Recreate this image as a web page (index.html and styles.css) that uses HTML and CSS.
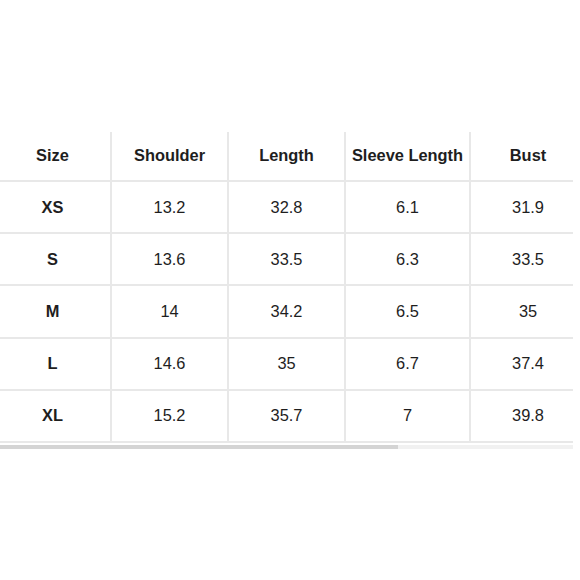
FILE: index.html
```html
<!DOCTYPE html>
<html>
<head>
<meta charset="utf-8">
<link rel="stylesheet" href="styles.css">
</head>
<body>
<div class="wrap">
  <table class="sizes">
    <colgroup>
      <col class="c1"><col class="c2"><col class="c3"><col class="c4"><col class="c5">
    </colgroup>
    <thead>
      <tr class="head"><th>Size</th><th>Shoulder</th><th>Length</th><th>Sleeve Length</th><th>Bust</th></tr>
    </thead>
    <tbody>
      <tr><th>XS</th><td>13.2</td><td>32.8</td><td>6.1</td><td>31.9</td></tr>
      <tr><th>S</th><td>13.6</td><td>33.5</td><td>6.3</td><td>33.5</td></tr>
      <tr><th>M</th><td>14</td><td>34.2</td><td>6.5</td><td>35</td></tr>
      <tr><th>L</th><td>14.6</td><td>35</td><td>6.7</td><td>37.4</td></tr>
      <tr><th>XL</th><td>15.2</td><td>35.7</td><td>7</td><td>39.8</td></tr>
    </tbody>
  </table>
  <div class="scroll"><div class="thumb"></div></div>
</div>
</body>
</html>
```
FILE: styles.css
```css
html, body {
  margin: 0;
  padding: 0;
  background: #fff;
}
body {
  font-family: "Liberation Sans", Arial, sans-serif;
  color: #1e1e1e;
}
.wrap {
  width: 573px;
  padding-top: 132px;
}
.sizes {
  width: 573px;
  border-collapse: collapse;
  table-layout: fixed;
  font-size: 16.4px;
}
.c1 { width: 111px; }
.c2 { width: 117px; }
.c3 { width: 117px; }
.c4 { width: 125px; }
.c5 { width: 103px; }
.sizes th, .sizes td {
  text-align: center;
  padding: 0;
  border-bottom: 2px solid #e8e8e8;
  border-left: 2px solid #e8e8e8;
  white-space: nowrap;
}
.sizes th:first-child, .sizes td:first-child {
  border-left: none;
  padding-right: 5px;
}
.sizes th:last-child, .sizes td:last-child {
  padding-left: 12px;
}
.sizes th { font-weight: bold; }
.sizes td { font-weight: normal; }
.head th {
  height: 46px;
  padding-bottom: 2px;
}
.sizes tbody th, .sizes tbody td {
  height: 50.2px;
}
.scroll {
  margin-top: 2px;
  height: 4px;
  width: 573px;
  background: #f1f1f1;
}
.thumb {
  width: 398px;
  height: 4px;
  background: #d4d4d4;
}
```
